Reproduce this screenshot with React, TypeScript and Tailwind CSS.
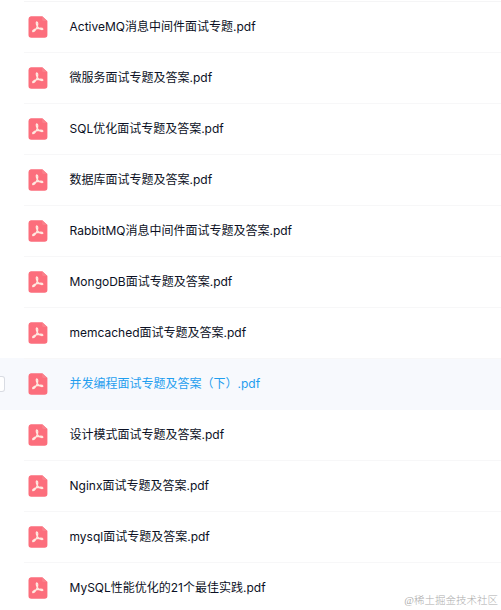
const files = [
  { name: 'ActiveMQ消息中间件面试专题.pdf' },
  { name: '微服务面试专题及答案.pdf' },
  { name: 'SQL优化面试专题及答案.pdf' },
  { name: '数据库面试专题及答案.pdf' },
  { name: 'RabbitMQ消息中间件面试专题及答案.pdf' },
  { name: 'MongoDB面试专题及答案.pdf' },
  { name: 'memcached面试专题及答案.pdf' },
  { name: '并发编程面试专题及答案（下）.pdf', active: true },
  { name: '设计模式面试专题及答案.pdf' },
  { name: 'Nginx面试专题及答案.pdf' },
  { name: 'mysql面试专题及答案.pdf' },
  { name: 'MySQL性能优化的21个最佳实践.pdf' },
]

function PdfIcon() {
  return (
    <svg width="20" height="22" viewBox="0 0 20 22" fill="none" className="shrink-0">
      <path d="M2.8.2h11.4L19.4 5v14a2.8 2.8 0 0 1-2.8 2.8H3.3A2.8 2.8 0 0 1 .5 19V3A2.8 2.8 0 0 1 2.8.2Z" fill="#fc6e7c" />
      <path d="M14.2.2 19.4 5h-3.6a1.6 1.6 0 0 1-1.6-1.6Z" fill="#f9818b" />
      <path
        d="M8.6 5.8c1.8.2 1.2 3.2.4 5.2-.8 2-2.4 4.7-4.1 4.7-1-1 1.6-2.4 4-3 2.2-.6 5.6-.8 6 .4-.8 1-3.6-.1-4.8-1.6-1.2-1.4-2.5-4.6-1.5-5.7Z"
        stroke="#ffe9e0"
        strokeWidth="1.25"
        strokeLinejoin="round"
      />
    </svg>
  )
}

export default function App() {
  return (
    <div className="relative h-[610px] w-[501px] overflow-hidden bg-white font-['Inter','Noto_Sans_CJK_SC',sans-serif]">
      <div className="ml-6 h-0.5 border-b border-[#f5f5f6]" />
      <ul>
        {files.map((file) => (
          <li key={file.name} className={file.active ? '-mt-px h-[52px] bg-[#f7f9fd] pb-px' : 'h-[51px]'}>
            <div className="flex h-full items-center">
              <div className="w-7 shrink-0">
                {file.active && (
                  <div className="h-4 w-[5px] rounded-r-[3px] border border-l-0 border-[#d9dce3] bg-white" />
                )}
              </div>
              <div className={file.active ? 'flex h-full flex-1 items-center' : '-ml-1 flex h-full flex-1 items-center border-b border-[#f7f7f8] pl-1'}>
                <PdfIcon />
                <span className={file.active ? 'ml-[21.5px] text-xs whitespace-nowrap text-[#1f9eef]' : 'ml-[21.5px] text-xs whitespace-nowrap text-[#0b1024]'}>
                  {file.name}
                </span>
              </div>
            </div>
          </li>
        ))}
      </ul>
      <div className="absolute right-[3px] bottom-px font-['Liberation_Serif','Noto_Sans_CJK_SC',serif] text-[10.5px] leading-4 font-light whitespace-nowrap text-[#adadad]">
        @稀土掘金技术社区
      </div>
    </div>
  )
}
